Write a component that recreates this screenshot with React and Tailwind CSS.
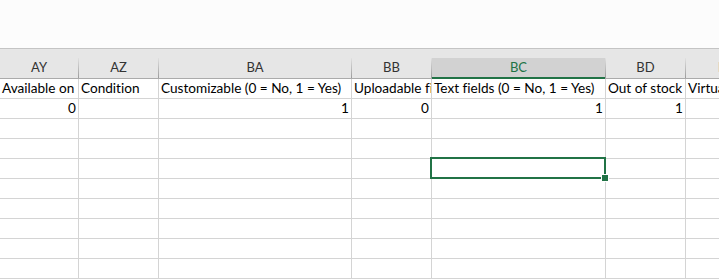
import React from "react";

const cols = [
  { key: "AY", w: 79 },
  { key: "AZ", w: 80 },
  { key: "BA", w: 193 },
  { key: "BB", w: 80 },
  { key: "BC", w: 174, sel: true },
  { key: "BD", w: 80 },
  { key: "BE", w: 80 },
];

const row1 = [
  "Available on",
  "Condition",
  "Customizable (0 = No, 1 = Yes)",
  "Uploadable files (0 = No, 1 = Yes)",
  "Text fields (0 = No, 1 = Yes)",
  "Out of stock",
  "Virtual product",
];
const row2 = ["0", "", "1", "0", "1", "1", ""];

const font = { fontFamily: "Lato, 'Liberation Sans', sans-serif" };

function Cell({ w, children, right, last }) {
  return (
    <div
      className={`shrink-0 h-full flex items-end ${last ? "" : "border-r border-[#d4d4d4]"} overflow-hidden whitespace-nowrap`}
      style={{ width: w }}
    >
      <div
        className={`w-full pb-[2px] leading-none text-[13.6px] text-black [font-variant-ligatures:none] ${right ? "text-right pr-[2px]" : "pl-[2px]"}`}
      >
        {children}
      </div>
    </div>
  );
}

export default function App() {
  return (
    <div className="w-[719px] h-[279px] overflow-hidden bg-white relative" style={font}>
      <div className="h-[49px] bg-[#fcfcfc] border-b border-[#c4c4c4]" />
      <div className="h-[30px] bg-[#e6e6e6] border-b border-[#ababab] flex items-end">
        {cols.map((c, i) => (
          <div key={c.key} className="shrink-0 h-[20px] flex" style={{ width: c.w }}>
            <div
              className={`relative flex-1 flex items-center justify-center text-[13px] overflow-visible whitespace-nowrap ${
                c.sel ? "bg-[#d2d2d2] text-[#217346]" : "text-[#333]"
              }`}
            >
              {c.key}
              {c.sel && (
                <div className="absolute left-0 right-0 bottom-[-1px] h-[2px] bg-[#217346]" />
              )}
            </div>
            {i < cols.length - 1 && (
              <div className="w-px h-full bg-[linear-gradient(to_bottom,#e0e0e0,#9c9c9c)]" />
            )}
          </div>
        ))}
      </div>
      {Array.from({ length: 10 }).map((_, r) => (
        <div key={r} className="h-[20px] flex border-b border-[#d4d4d4]">
          {cols.map((c, i) => (
            <Cell key={c.key} w={c.w} right={r === 1} last={i === cols.length - 1}>
              {r === 0 ? row1[i] : r === 1 ? row2[i] : ""}
            </Cell>
          ))}
        </div>
      ))}
      <div className="absolute left-[430px] top-[157px] w-[176px] h-[22px] border-2 border-[#217346]" />
      <div className="absolute left-[602px] top-[175px] w-[6px] h-[6px] bg-[#217346] outline outline-1 outline-white" />
    </div>
  );
}
